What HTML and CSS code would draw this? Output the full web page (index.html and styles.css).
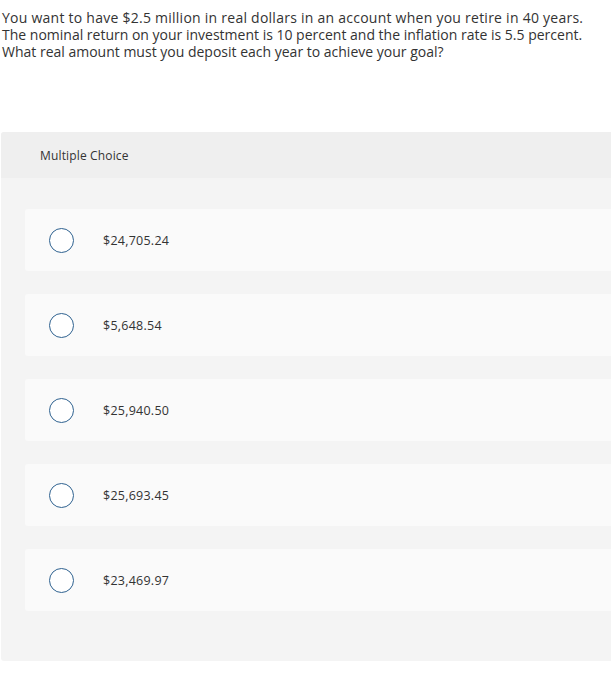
FILE: index.html
```html
<!DOCTYPE html>
<html>
<head>
<meta charset="utf-8">
<link rel="stylesheet" href="styles.css">
</head>
<body>
<div class="question">
<p><span class="line line-wide">You want to have $2.5 million in real dollars in an account when you retire in 40 years.</span> <span class="line">The nominal return on your investment is 10 percent and the inflation rate is 5.5 percent.</span> <span class="line">What real amount must you deposit each year to achieve your goal?</span></p>
</div>
<div class="panel">
<div class="panel-head">Multiple Choice</div>
<div class="panel-body">
<div class="option"><span class="radio"></span><span class="label">$24,705.24</span></div>
<div class="option"><span class="radio"></span><span class="label">$5,648.54</span></div>
<div class="option"><span class="radio"></span><span class="label">$25,940.50</span></div>
<div class="option"><span class="radio"></span><span class="label">$25,693.45</span></div>
<div class="option"><span class="radio"></span><span class="label">$23,469.97</span></div>
</div>
</div>
</body>
</html>
```
FILE: styles.css
```css
html, body {
  margin: 0;
  padding: 0;
  background: #fff;
  overflow: hidden;
}
body {
  font-family: "Open Sans", "Liberation Sans", sans-serif;
  color: #333;
}
.question {
  padding: 9px 2px 0 2px;
  height: 60px;
}
.question p {
  margin: 0;
  font-size: 14px;
  line-height: 17px;
  white-space: nowrap;
}
.line {
  display: block;
  height: 17px;
  letter-spacing: 0;
}
.line-wide {
  letter-spacing: 0.25px;
}
.panel {
  margin: 63px 0 0 1px;
  background: #f4f4f4;
  border-radius: 3px 0 0 3px;
  padding-bottom: 50px;
}
.panel-head {
  background: #efefef;
  height: 46px;
  display: flex;
  align-items: center;
  padding-left: 39px;
  font-size: 12px;
  letter-spacing: 0.15px;
  border-radius: 3px 0 0 0;
}
.panel-body {
  padding: 31px 0 0 24px;
  display: flex;
  flex-direction: column;
  gap: 23px;
}
.option {
  background: #fafafa;
  height: 62px;
  display: flex;
  align-items: center;
  padding-left: 24px;
  border-radius: 3px 0 0 3px;
}
.radio {
  width: 23px;
  height: 23px;
  border: 1.5px solid #2f6290;
  border-radius: 50%;
  background: #fff;
  flex: none;
}
.label {
  margin-left: 29px;
  font-size: 12.5px;
  letter-spacing: 0.25px;
}
```
